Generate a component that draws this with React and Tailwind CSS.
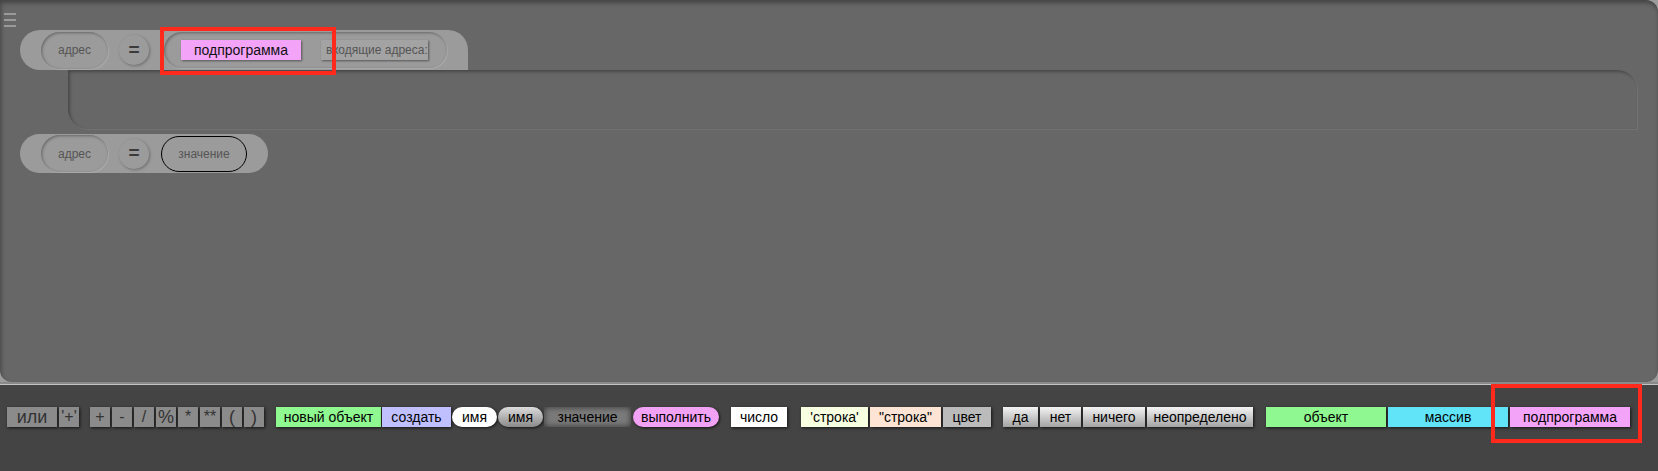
import React from "react"

const font = { fontFamily: '"Liberation Sans", Arial, sans-serif' }

const inset = "shadow-[inset_1px_1px_3px_rgba(0,0,0,0.35),1px_1px_1px_rgba(255,255,255,0.15)]"
const btnShadow = "shadow-[1px_1px_3px_rgba(0,0,0,0.7)]"

const Address = () => (
  <div className={`w-[67px] h-[37px] rounded-full flex items-center justify-center text-[12px] text-[#555] ${inset}`}>
    адрес
  </div>
)

const Equals = () => (
  <div className="ml-[11px] w-[30px] h-[30px] rounded-full flex items-center justify-center text-[19px] font-bold text-[#3a3a3a] shadow-[1px_1px_3px_rgba(0,0,0,0.3)]">
    =
  </div>
)

const Btn = ({ w, cls = "", children }) => (
  <div className={`h-[20px] flex items-center justify-center shrink-0 ${btnShadow} ${cls}`} style={{ width: w }}>
    {children}
  </div>
)

const Op = ({ w = 20, children, big }) => (
  <Btn w={w} cls={`bg-[#8b8b8b] text-[#333] ${big ? "text-[18px]" : "text-[16px]"}`}>{children}</Btn>
)

export default function App() {
  return (
    <div className="relative w-[1658px] h-[471px] overflow-hidden bg-[#444444]" style={font}>
      {/* canvas */}
      <div className="bg-[#9c9c9c]">
        <div className="relative h-[382px] bg-[#676767] rounded-b-[12px] rounded-tr-[12px] shadow-[inset_1px_3px_4px_rgba(0,0,0,0.35)] pt-[30px] pl-[20px]">
          <div className="absolute left-[4px] top-[13px] flex flex-col gap-[4px]">
            <div className="w-[12px] h-[2px] bg-[#9a9a9a]" />
            <div className="w-[12px] h-[2px] bg-[#9a9a9a]" />
            <div className="w-[12px] h-[2px] bg-[#9a9a9a]" />
          </div>

          {/* row 1 */}
          <div className="w-[448px] h-[40px] flex items-center pl-[21px] bg-[#9b9b9b] rounded-l-[20px] rounded-tr-[20px]">
            <Address />
            <Equals />
            <div className={`ml-[15px] w-[283px] h-[36px] rounded-full flex items-center pl-[17px] ${inset}`}>
              <div className="w-[120px] h-[20px] bg-[#f4a4f8] text-[14px] text-[#111] flex items-center justify-center shadow-[1px_1px_2px_rgba(0,0,0,0.45)]">
                подпрограмма
              </div>
              <div className="ml-[20px] w-[107px] h-[20px] bg-[#a3a3a3] text-[12px] text-[#555] flex items-center pl-[5px] whitespace-nowrap shadow-[1px_1px_2px_rgba(0,0,0,0.45)]">
                входящие адреса:
              </div>
            </div>
          </div>

          {/* body */}
          <div className="ml-[48px] w-[1569px] h-[59px] rounded-bl-[20px] rounded-tr-[20px] shadow-[inset_2px_2px_3px_rgba(0,0,0,0.3),1px_1px_1px_rgba(255,255,255,0.08)]" />

          {/* row 2 */}
          <div className="mt-[5px] w-[248px] h-[39px] flex items-center pl-[21px] bg-[#9b9b9b] rounded-full">
            <Address />
            <Equals />
            <div className="ml-[12px] w-[86px] h-[36px] rounded-full border-[1.5px] border-black flex items-center justify-center text-[12px] text-[#555]">
              значение
            </div>
          </div>
        </div>
      </div>
      <div className="h-[3px] bg-[#8a8a8a] border-b border-[#c4c4c4]" />

      {/* palette */}
      <div className="flex items-start pt-[22px] pl-[7px] text-[14px] text-black">
        <div className="flex gap-[2px]">
          <Op w={50} big>или</Op>
          <Op>'+'</Op>
        </div>
        <div className="ml-[11px] flex gap-[2px]">
          <Op>+</Op>
          <Op>-</Op>
          <Op>/</Op>
          <Op big>%</Op>
          <Op>*</Op>
          <Op>**</Op>
          <Op big>(</Op>
          <Op big>)</Op>
        </div>
        <div className="ml-[12px] flex gap-[1px]">
          <Btn w={105} cls="bg-[#90f890]">новый объект</Btn>
          <Btn w={69} cls="bg-[#c0c0ff]">создать</Btn>
          <Btn w={45} cls="bg-white rounded-full">имя</Btn>
          <Btn w={45} cls="rounded-full bg-linear-to-b from-[#dcdcdc] to-[#8a8a8a]">имя</Btn>
          <Btn w={87} cls="bg-[#7a7a7a] shadow-[inset_0_0_6px_rgba(0,0,0,0.6)]">значение</Btn>
          <Btn w={86} cls="ml-[1px] bg-[#f2a2f4] rounded-full">выполнить</Btn>
        </div>
        <div className="ml-[12px] flex">
          <Btn w={56} cls="bg-white">число</Btn>
        </div>
        <div className="ml-[14px] flex gap-[2px]">
          <Btn w={67} cls="bg-[#f8ffe0]">'строка'</Btn>
          <Btn w={71} cls="bg-[#fde4d4]">"строка"</Btn>
          <Btn w={48} cls="bg-[#bbbbbb]">цвет</Btn>
        </div>
        <div className="ml-[12px] flex gap-[2px]">
          <Btn w={35} cls="bg-linear-to-b from-[#f4f4f4] to-[#a4a4a4]">да</Btn>
          <Btn w={41} cls="bg-linear-to-b from-[#f4f4f4] to-[#a4a4a4]">нет</Btn>
          <Btn w={62} cls="bg-linear-to-b from-[#f4f4f4] to-[#a4a4a4]">ничего</Btn>
          <Btn w={106} cls="bg-linear-to-b from-[#f4f4f4] to-[#a4a4a4]">неопределено</Btn>
        </div>
        <div className="ml-[13px] flex gap-[2px]">
          <Btn w={120} cls="bg-[#90f890]">объект</Btn>
          <Btn w={120} cls="bg-[#62e4f8]">массив</Btn>
          <Btn w={120} cls="bg-[#f4a4f8]">подпрограмма</Btn>
        </div>
      </div>

      {/* highlight frames */}
      <div className="absolute left-[160px] top-[27px] w-[176px] h-[48px] border-[4px] border-[#ff2a1c]" />
      <div className="absolute left-[1491px] top-[384px] w-[151px] h-[59px] border-[4px] border-[#ff2a1c]" />
    </div>
  )
}
